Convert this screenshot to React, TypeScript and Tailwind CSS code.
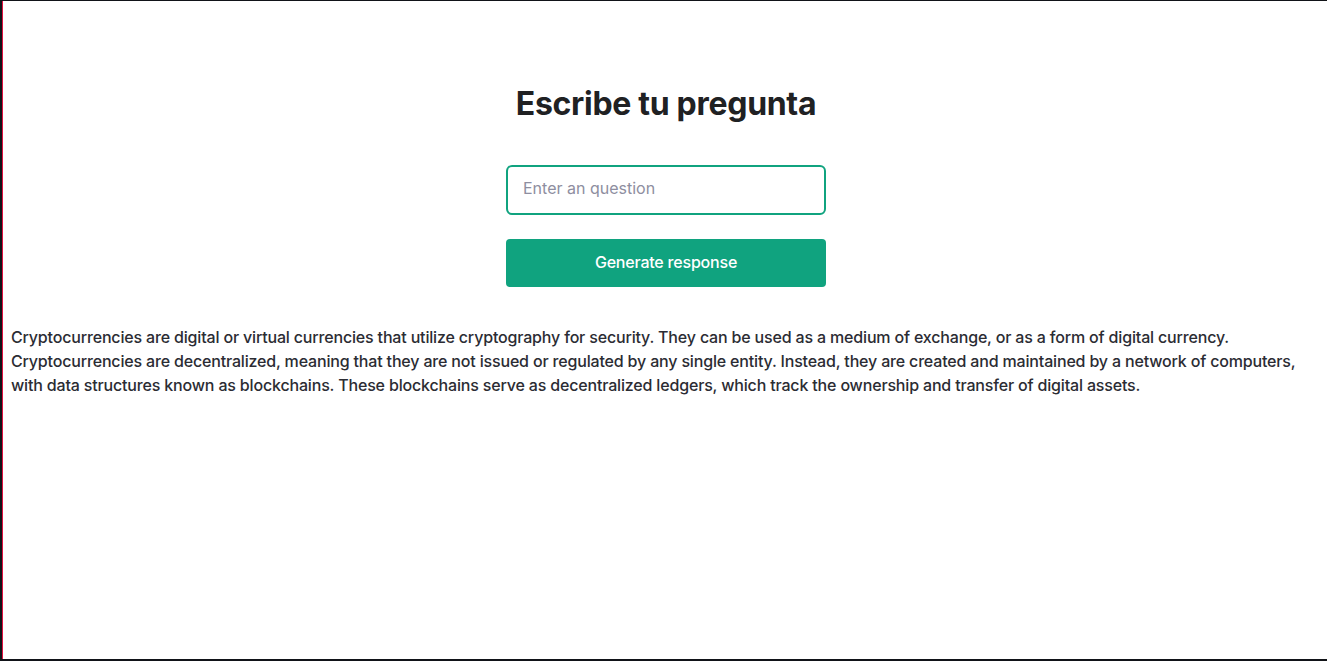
import { useState } from 'react';

const answerLines = [
  'Cryptocurrencies are digital or virtual currencies that utilize cryptography for security. They can be used as a medium of exchange, or as a form of digital currency.',
  'Cryptocurrencies are decentralized, meaning that they are not issued or regulated by any single entity. Instead, they are created and maintained by a network of computers,',
  'with data structures known as blockchains. These blockchains serve as decentralized ledgers, which track the ownership and transfer of digital assets.',
];

export default function App() {
  const [question, setQuestion] = useState('');

  return (
    <div
      className="h-[661px] w-[1327px] overflow-hidden bg-[#111318] pl-[2px] pt-px pb-[2px]"
      style={{ fontFamily: 'Inter, "Noto Sans", sans-serif' }}
    >
      <div className="h-full w-full border-l border-[#e0103f] bg-white">
        <main className="ml-[2px] flex flex-col items-center pt-[83px]">
          <h1 className="text-[32px] font-bold leading-10 tracking-[-0.3px] text-[#202123]">Escribe tu pregunta</h1>
          <form className="mt-[41px] flex w-[320px] flex-col" onSubmit={(e) => e.preventDefault()}>
            <input
              autoFocus
              value={question}
              onChange={(e) => setQuestion(e.target.value)}
              placeholder="Enter an question"
              className="h-[50px] rounded-md border-2 border-[#10a37f] px-[15px] pb-1 text-base text-[#202123] outline-none placeholder:text-[#8e8ea0]"
            />
            <button
              type="submit"
              className="mt-6 h-[48px] rounded-[4px] bg-[#10a37f] pb-[3px] text-base font-medium tracking-[-0.2px] text-white"
            >
              Generate response
            </button>
          </form>
        </main>
        <p className="mt-[38px] px-2 text-base font-medium leading-6 tracking-[-0.17px] text-[#2b2c33]">
          {answerLines.map((line) => (
            <span key={line} className="block whitespace-nowrap">
              {line}
            </span>
          ))}
        </p>
      </div>
    </div>
  );
}
